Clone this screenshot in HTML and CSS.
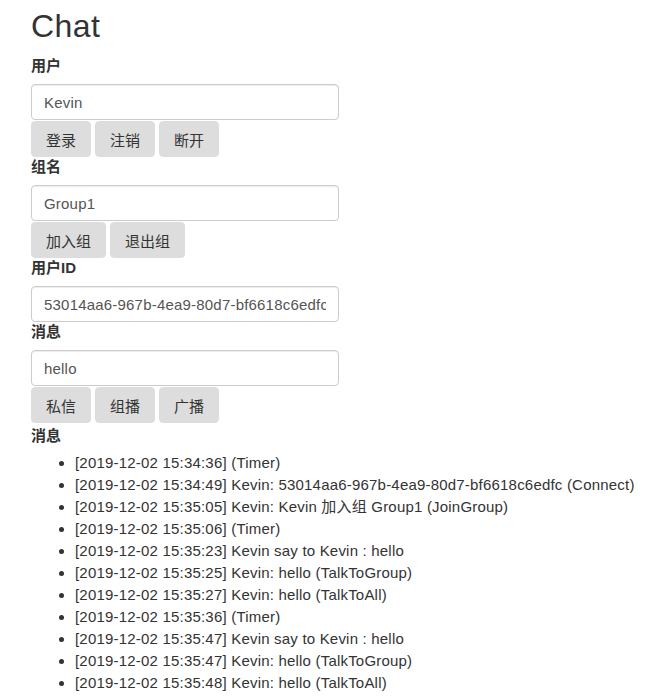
FILE: index.html
```html
<!DOCTYPE html>
<html lang="zh">
<head>
<meta charset="utf-8">
<title>Chat</title>
<link rel="stylesheet" href="styles.css">
</head>
<body>
<div class="container">
  <h1 class="title">Chat</h1>
  <label class="field-label">用户</label>
  <input class="field" type="text" value="Kevin">
  <div class="btn-row">
    <button class="btn">登录</button>
    <button class="btn">注销</button>
    <button class="btn">断开</button>
  </div>
  <label class="field-label">组名</label>
  <input class="field" type="text" value="Group1">
  <div class="btn-row">
    <button class="btn">加入组</button>
    <button class="btn">退出组</button>
  </div>
  <label class="field-label">用户ID</label>
  <input class="field" type="text" value="53014aa6-967b-4ea9-80d7-bf6618c6edfc">
  <label class="field-label">消息</label>
  <input class="field" type="text" value="hello">
  <div class="btn-row">
    <button class="btn">私信</button>
    <button class="btn">组播</button>
    <button class="btn">广播</button>
  </div>
  <label class="field-label list-label">消息</label>
  <ul class="messages">
    <li>[2019-12-02 15:34:36] (Timer)</li>
    <li>[2019-12-02 15:34:49] Kevin: 53014aa6-967b-4ea9-80d7-bf6618c6edfc (Connect)</li>
    <li>[2019-12-02 15:35:05] Kevin: Kevin 加入组 Group1 (JoinGroup)</li>
    <li>[2019-12-02 15:35:06] (Timer)</li>
    <li>[2019-12-02 15:35:23] Kevin say to Kevin : hello</li>
    <li>[2019-12-02 15:35:25] Kevin: hello (TalkToGroup)</li>
    <li>[2019-12-02 15:35:27] Kevin: hello (TalkToAll)</li>
    <li>[2019-12-02 15:35:36] (Timer)</li>
    <li>[2019-12-02 15:35:47] Kevin say to Kevin : hello</li>
    <li>[2019-12-02 15:35:47] Kevin: hello (TalkToGroup)</li>
    <li>[2019-12-02 15:35:48] Kevin: hello (TalkToAll)</li>
  </ul>
</div>
</body>
</html>
```

FILE: styles.css
```css
html, body {
  margin: 0;
  padding: 0;
  background: #fff;
}
body {
  font-family: "Liberation Sans", Arial, "Noto Sans CJK SC", sans-serif;
  font-size: 15px;
  letter-spacing: 0.2px;
  line-height: 20px;
  color: #333;
}
.container {
  padding-left: 31px;
  display: flex;
  flex-direction: column;
  align-items: flex-start;
}
.title {
  font-size: 32px;
  font-weight: 500;
  line-height: 35px;
  letter-spacing: 0.4px;
  margin: 9px 0 12px;
}
.field-label {
  display: block;
  font-weight: bold;
  line-height: 20px;
  letter-spacing: 0;
  margin-bottom: 8px;
}
.field {
  box-sizing: border-box;
  width: 308px;
  height: 36px;
  padding: 6px 12px;
  font-family: inherit;
  font-size: 15px;
  letter-spacing: 0.2px;
  color: #555;
  background: #fff;
  border: 1px solid #ccc;
  border-radius: 4px;
  box-shadow: inset 0 1px 1px rgba(0,0,0,0.075);
  margin: 0;
}
.btn-row {
  display: flex;
  gap: 4px;
  margin-top: 1px;
}
.btn {
  box-sizing: border-box;
  height: 36px;
  padding: 0 14px;
  font-family: inherit;
  font-size: 15px;
  letter-spacing: 0;
  color: #333;
  background: #ddd;
  border: 1px solid #ddd;
  border-radius: 4px;
  margin: 0;
}
.list-label {
  margin-top: 3px;
  margin-bottom: 6px;
}
.messages {
  margin: 0;
  padding-left: 44px;
  line-height: 22px;
  color: #333;
}
```
